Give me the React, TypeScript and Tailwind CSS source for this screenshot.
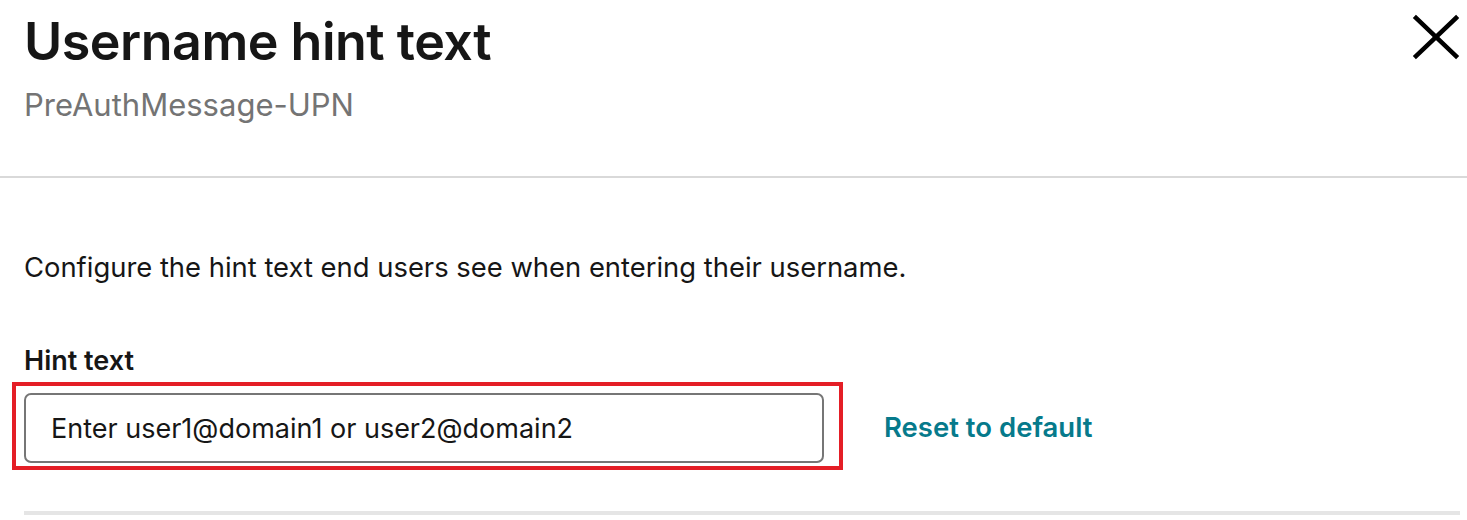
export default function App() {
  return (
    <div className="relative w-[1467px] h-[520px] overflow-hidden bg-white font-['Inter',sans-serif] text-[#161616]">
      {/* Header */}
      <header className="flex items-start justify-between border-b-2 border-[#d9d9d9] h-[178px] pl-[24px] pr-[7px]">
        <div className="pt-[10px]">
          <h1 className="text-[52px] leading-[64px] font-semibold tracking-[-0.5px]">Username hint text</h1>
          <p className="mt-[12px] text-[31px] leading-[38px] text-[#747474]">PreAuthMessage-UPN</p>
        </div>
        <button aria-label="Close" className="mt-[14px] text-black">
          <svg width="48" height="46" viewBox="0 0 48 46" fill="none" stroke="currentColor" strokeWidth="4.5" strokeLinecap="square">
            <line x1="4" y1="4" x2="44" y2="42" />
            <line x1="44" y1="4" x2="4" y2="42" />
          </svg>
        </button>
      </header>

      {/* Body */}
      <section className="pl-[24px] pr-[7px]">
        <p className="mt-[72px] text-[27.4px] leading-[34px]">
          Configure the hint text end users see when entering their username.
        </p>

        <label className="block mt-[60px] text-[27px] leading-[34px] font-semibold">Hint text</label>

        <div className="relative flex items-center gap-[60px] mt-[15px]">
          <input
            readOnly
            value="Enter user1@domain1 or user2@domain2"
            className="w-[800px] h-[70px] rounded-[7px] border-2 border-[#767676] px-[25px] text-[27px] text-[#161616] outline-none"
          />
          <button className="text-[27.5px] font-semibold text-[#067a8b]">Reset to default</button>

          {/* annotation */}
          <div className="pointer-events-none absolute left-[-12px] top-[-11px] w-[831px] h-[88px] border-4 border-[#e41e26]" />
        </div>

        <div className="mt-[48px] h-[4px] bg-[#e5e5e5]" />
      </section>
    </div>
  )
}
